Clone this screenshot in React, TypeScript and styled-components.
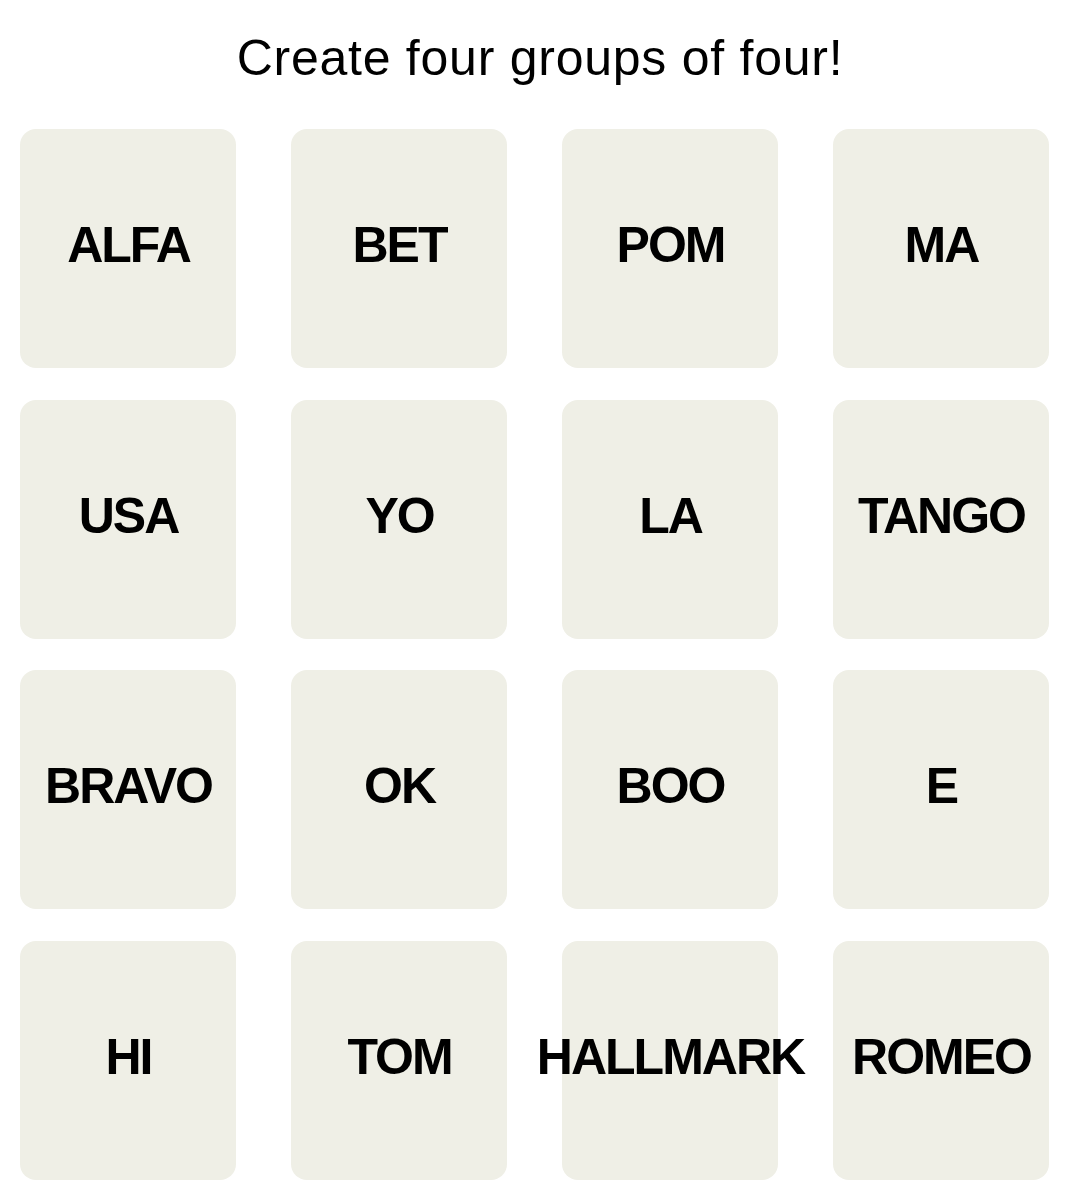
import styled, { createGlobalStyle } from 'styled-components';

const GlobalStyle = createGlobalStyle`
  html, body {
    margin: 0;
    padding: 0;
    background: #fff;
  }
  body {
    font-family: 'Liberation Sans', Arial, sans-serif;
    color: #000;
  }
`;

const Page = styled.main`
  width: 1080px;
  padding: 28px 32px 20px 20px;
  box-sizing: border-box;
  display: flex;
  flex-direction: column;
  align-items: center;
  gap: 41px;
`;

const Heading = styled.h1`
  margin: 0;
  height: 60px;
  line-height: 60px;
  font-size: 50px;
  font-weight: 400;
  letter-spacing: 0.75px;
  text-align: center;
  width: 1080px;
  margin-left: -20px;
  margin-right: -32px;
`;

const Board = styled.div`
  display: grid;
  grid-template-columns: repeat(4, 216px);
  grid-auto-rows: 239px;
  column-gap: 55px;
  row-gap: 31.7px;
`;

const Card = styled.button`
  border: none;
  border-radius: 16px;
  background: #efefe6;
  display: flex;
  align-items: center;
  justify-content: center;
  padding: 0 0 7px 2px;
  overflow: visible;
  white-space: nowrap;
  font-family: 'Liberation Sans', Arial, sans-serif;
  font-size: 50px;
  font-weight: 700;
  letter-spacing: -2px;
  color: #000;
  cursor: pointer;
`;

const words = [
  'ALFA', 'BET', 'POM', 'MA',
  'USA', 'YO', 'LA', 'TANGO',
  'BRAVO', 'OK', 'BOO', 'E',
  'HI', 'TOM', 'HALLMARK', 'ROMEO',
];

const App = () => {
  return (
    <>
      <GlobalStyle />
      <Page>
        <Heading>Create four groups of four!</Heading>
        <Board>
          {words.map((word) => (
            <Card key={word}>{word}</Card>
          ))}
        </Board>
      </Page>
    </>
  );
};

export default App;
